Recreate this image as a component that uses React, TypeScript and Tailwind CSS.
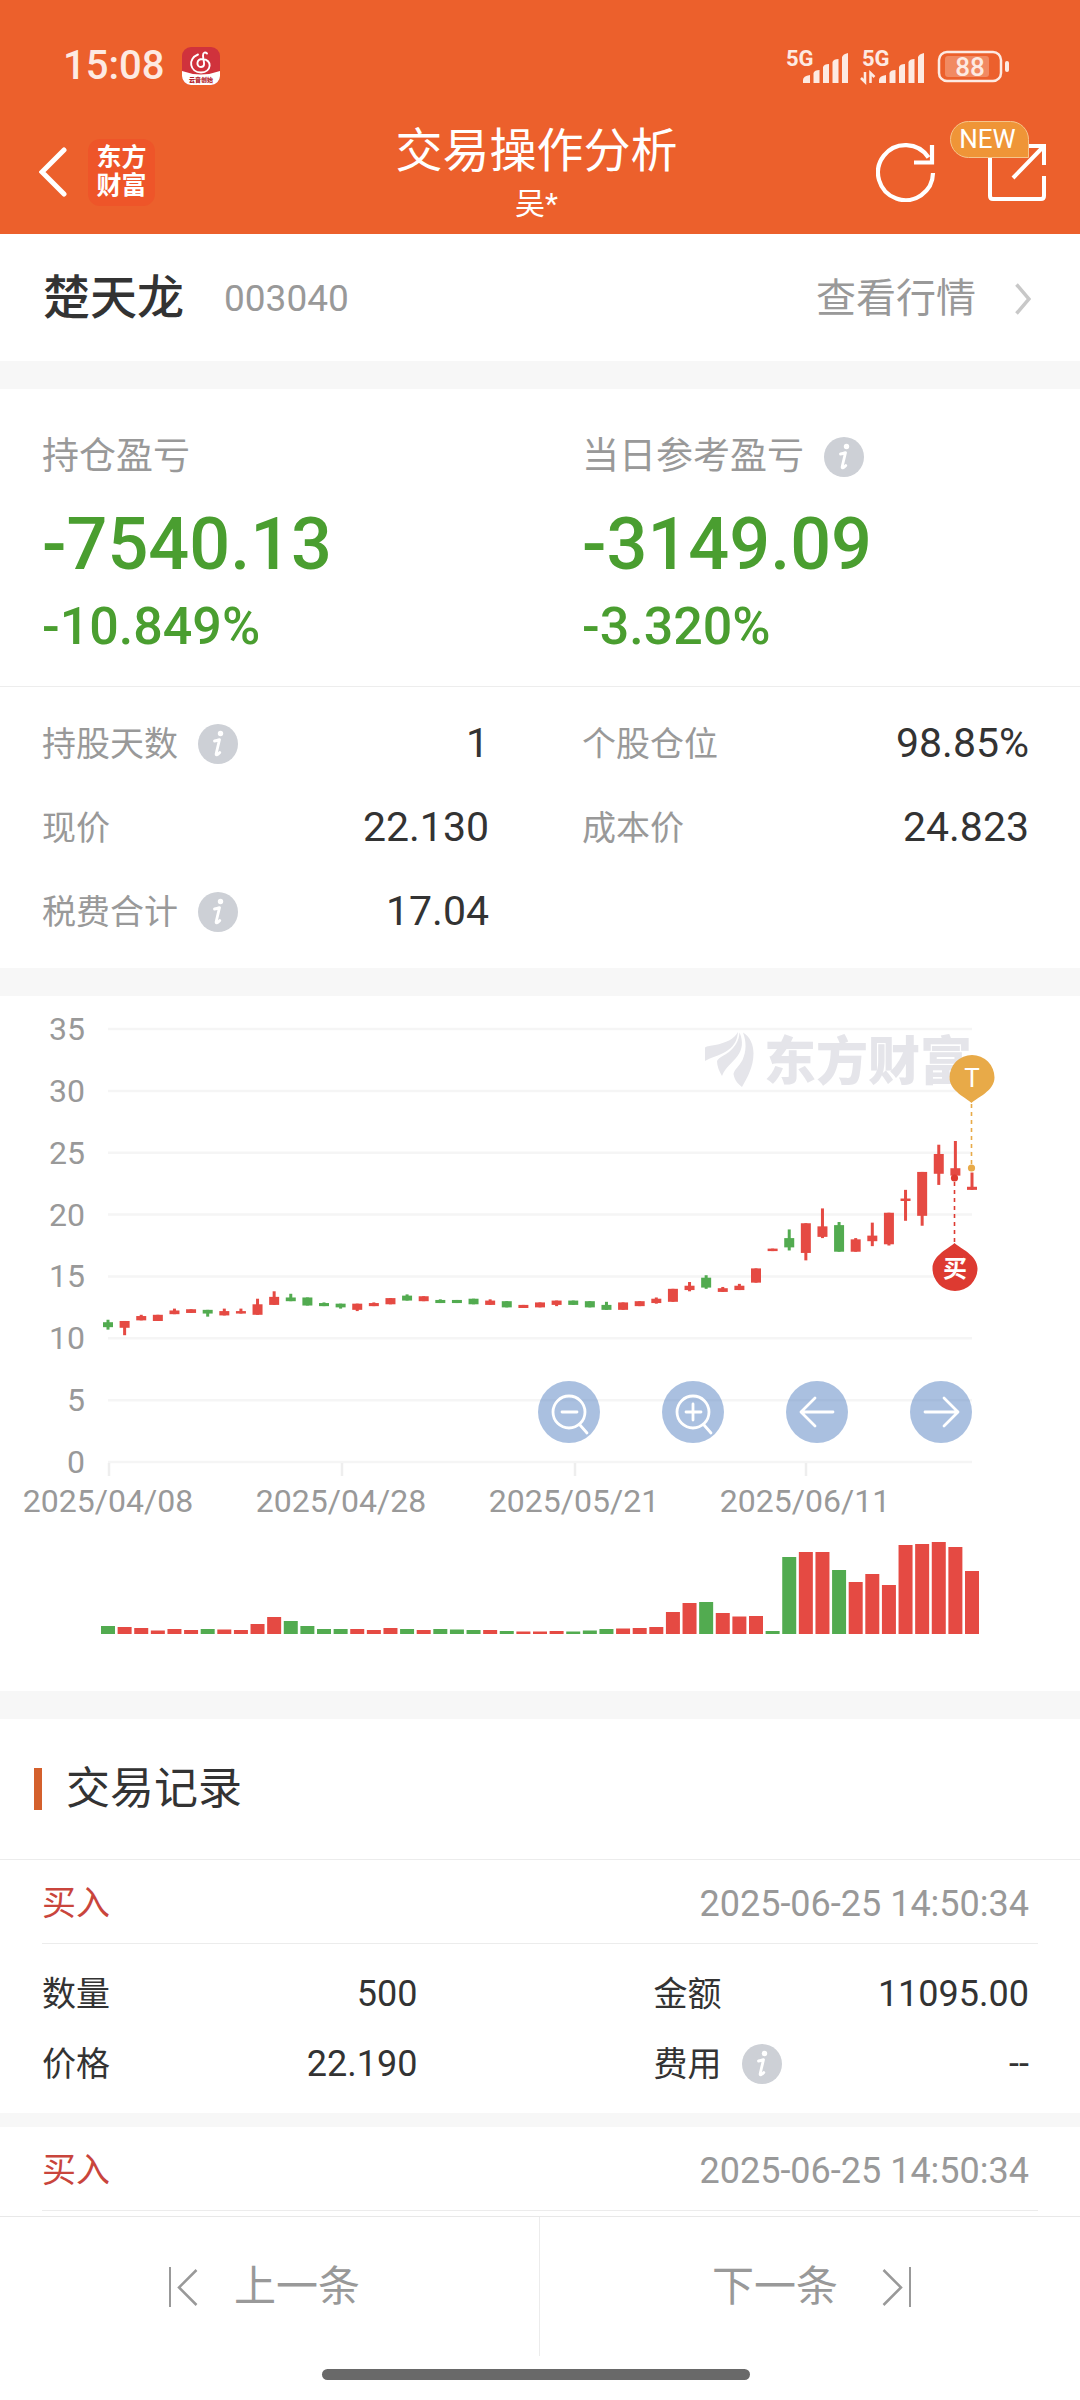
import { ReactNode } from "react";

const RED = "#e54a43";
const GREEN = "#52ab50";

type Candle = {
  color: string;
  high: number;
  top: number;
  bottom: number;
  low: number;
  volume: number;
  volumeColor: string;
};

const colors = { r: RED, g: GREEN };

const candle = (
  color: "r" | "g",
  high: number,
  top: number,
  bottom: number,
  low: number,
  volume: number,
  volumeColor: "r" | "g" = color
): Candle => ({ color: colors[color], high, top, bottom, low, volume, volumeColor: colors[volumeColor] });

const candles: Candle[] = [
  candle("g", 11.5, 11.3, 10.9, 10.7, 8),
  candle("r", 11.4, 11.4, 10.85, 10.25, 7),
  candle("r", 11.9, 11.8, 11.45, 11.45, 6),
  candle("r", 11.9, 11.9, 11.4, 11.4, 3.5),
  candle("r", 12.4, 12.25, 11.95, 11.95, 5),
  candle("r", 12.35, 12.35, 12.05, 12.05, 4),
  candle("g", 12.3, 12.3, 12, 11.75, 5),
  candle("r", 12.4, 12.2, 11.85, 11.85, 4.5),
  candle("r", 12.4, 12.2, 12, 12, 4),
  candle("r", 13.2, 12.75, 11.9, 11.9, 10),
  candle("r", 13.8, 13.35, 12.7, 12.7, 17),
  candle("g", 13.6, 13.3, 13, 13, 13),
  candle("g", 13.3, 13.3, 12.65, 12.65, 8),
  candle("g", 12.9, 12.85, 12.6, 12.6, 5),
  candle("g", 12.8, 12.8, 12.5, 12.4, 5),
  candle("r", 12.8, 12.8, 12.3, 12.2, 5),
  candle("r", 12.9, 12.85, 12.6, 12.6, 4),
  candle("r", 13.25, 13.25, 12.75, 12.75, 6),
  candle("g", 13.55, 13.45, 13.05, 13.05, 5),
  candle("r", 13.4, 13.4, 13, 13, 4),
  candle("g", 13.15, 13.1, 12.85, 12.85, 5),
  candle("g", 13.1, 13.1, 12.85, 12.85, 4.5),
  candle("g", 13.2, 13.2, 12.75, 12.75, 4),
  candle("r", 13.15, 13.05, 12.7, 12.7, 4),
  candle("g", 13, 13, 12.5, 12.5, 3),
  candle("r", 12.7, 12.7, 12.45, 12.45, 2.5),
  candle("r", 12.9, 12.9, 12.5, 12.5, 2.5),
  candle("r", 13.05, 13.05, 12.7, 12.6, 3),
  candle("g", 13.05, 13.05, 12.7, 12.7, 2.5),
  candle("g", 13, 13, 12.5, 12.5, 3.5),
  candle("g", 12.95, 12.7, 12.3, 12.3, 5),
  candle("r", 12.9, 12.9, 12.3, 12.3, 5.5),
  candle("r", 13, 13, 12.6, 12.6, 6),
  candle("r", 13.3, 13.2, 12.85, 12.8, 7),
  candle("r", 14, 14, 12.95, 12.95, 22),
  candle("r", 14.55, 14.25, 13.9, 13.8, 31),
  candle("g", 15.1, 14.9, 14.1, 14, 32),
  candle("r", 14.15, 14.05, 13.75, 13.75, 21),
  candle("r", 14.4, 14.25, 13.9, 13.9, 17.5),
  candle("r", 15.65, 15.65, 14.5, 14.5, 18),
  candle("r", 17.25, 17.25, 17.05, 17.05, 3, "g"),
  candle("g", 18.8, 18.1, 17.35, 17.1, 77),
  candle("r", 19.3, 19.3, 16.9, 16.3, 82),
  candle("r", 20.5, 19.05, 18.2, 18.1, 82),
  candle("g", 19.4, 19.15, 17, 17, 64),
  candle("r", 18.1, 18, 17, 17, 52),
  candle("r", 19.35, 18.3, 17.85, 17.45, 60),
  candle("r", 20.15, 20.15, 17.6, 17.5, 49),
  candle("r", 22, 21.3, 21.1, 19.5, 89),
  candle("r", 23.45, 23.45, 19.9, 19.1, 90),
  candle("r", 25.65, 24.9, 23.3, 22.4, 92),
  candle("r", 25.95, 23.75, 23.15, 23.15, 87),
  candle("r", 23.4, 22.25, 22, 22, 63),
];

const prices = [35, 30, 25, 20, 15, 10, 5, 0];

const dates = [
  { x: 108, label: "2025/04/08" },
  { x: 341, label: "2025/04/28" },
  { x: 574, label: "2025/05/21" },
  { x: 805, label: "2025/06/11" },
];

const xOf = (i: number) => 108 + (i * 864) / 52;
const yOf = (price: number) => 466 - price * 12.37;

function InfoButton({ label }: { label: string }) {
  return (
    <button type="button" aria-label={label} className="shrink-0">
      <svg className="size-10" viewBox="0 0 40 40">
        <circle cx="20" cy="20" r="20" fill="#cdd0d6" />
        <circle cx="22.5" cy="9.5" r="2.7" fill="#fff" />
        <path
          d="M16.500 17c2-.3 3.500-.8 5-1.400L18.200 29.500c-.4 2 .8 2 3.600-1"
          fill="none"
          stroke="#fff"
          strokeWidth="2.8"
          strokeLinecap="round"
          strokeLinejoin="round"
        />
      </svg>
    </button>
  );
}

function SignalBars() {
  return (
    <g fill="#fdeae2">
      <path d="M0 30v-3q0-4 7-5v8z" />
      <path d="M10.500 30V20q1-3 6-3v13z" />
      <path d="M20 30V14q1-3 6-3v19z" />
      <path d="M29.500 30V9q1-3 6-3v24z" />
      <path d="M39 30V4q1-3 6-4v30z" />
    </g>
  );
}

function StatusBar() {
  return (
    <div className="flex h-[100px] items-center justify-between pt-8 pr-[70px] pl-[63px] text-[#fdeae2]">
      <div className="flex items-center gap-[18px]">
        <span className="text-[40px] leading-none font-medium">15:08</span>
        <svg className="size-[38px]" viewBox="0 0 38 38">
          <rect width="38" height="38" rx="9" fill="#d0323c" />
          <path d="M0 24q19 7 38 0v5a9 9 0 0 1-9 9H9a9 9 0 0 1-9-9z" fill="#fff" />
          <path
            d="M16 7.500C5 12 8 25.500 19 25.500C30 25 30.500 12.500 20.500 12c-6.500 0-6.500 8-1.500 8 5.500 0 2-7 2-11.500 0-3.500 2.500-3.500 4-2"
            fill="none"
            stroke="#fff"
            strokeWidth="1.900"
            strokeLinecap="round"
          />
          <text x="19" y="35" textAnchor="middle" fontSize="6" fontWeight="900" fill="#b3262e">
            云音创始
          </text>
        </svg>
      </div>

      <svg className="h-[48px] w-[224px]" viewBox="0 -6 224 48" fill="#fdeae2">
        <text x="0" y="18" fontSize="22" fontWeight="700">5G</text>
        <g transform="translate(17 5)">
          <SignalBars />
        </g>
        <text x="76" y="18" fontSize="22" fontWeight="700">5G</text>
        <path d="M79 24v10l-4-4M84.500 35V25l4 4" fill="none" stroke="#fdeae2" strokeWidth="2.500" />
        <g transform="translate(93 5)">
          <SignalBars />
        </g>
        <rect x="153" y="4" width="62" height="29" rx="8" fill="none" stroke="#fdeae2" strokeWidth="2.500" />
        <rect x="159" y="8" width="44" height="21" rx="3" fillOpacity="0.3" />
        <rect x="219" y="13" width="4" height="11" rx="2" />
        <text x="184" y="28" textAnchor="middle" fontSize="26" fontWeight="500">88</text>
      </svg>
    </div>
  );
}

function Header() {
  return (
    <header className="bg-[#ec602c] text-white">
      <StatusBar />

      <div className="grid h-[134px] grid-cols-[1fr_auto_1fr] items-center pt-2.5 pr-[34px] pl-[39px]">
        <div className="flex items-center gap-[21px]">
          <button type="button" aria-label="返回">
            <svg className="h-[50px] w-7" viewBox="0 0 28 50" fill="none" stroke="#fff" strokeWidth="5" strokeLinecap="round">
              <path d="M25 3 3 25l22 22" />
            </svg>
          </button>
          <a
            href="#home"
            className="flex size-[67px] flex-col items-center justify-center rounded-xl bg-[#ee5529] text-[25px] leading-7 font-bold"
          >
            <span>东方</span>
            <span>财富</span>
          </a>
        </div>

        <div className="flex flex-col items-center gap-1.5 pr-3">
          <h1 className="text-[47px] leading-[58px] font-normal">交易操作分析</h1>
          <p className="text-[30px] leading-9">吴*</p>
        </div>

        <div className="flex items-center justify-end gap-[52px]">
          <button type="button" aria-label="刷新">
            <svg className="size-[60px]" viewBox="0 0 60 60" fill="none" stroke="#fff" strokeWidth="4.200">
              <path d="M57 31A27.500 27.500 0 1 1 52.500 15.500" />
              <path d="M56 3v17.500H38" />
            </svg>
          </button>
          <button type="button" aria-label="分享" className="relative">
            <svg className="size-[58px]" viewBox="0 0 58 58" fill="none" stroke="#fff" strokeWidth="4">
              <path d="M2 12v41q0 3 3 3h48q3 0 3-3V33" />
              <path d="M40 3h16v19M56 3 25 35" />
            </svg>
            <span className="absolute -top-[22px] -left-[38px] flex h-[37px] w-[79px] items-center justify-center rounded-[19px] rounded-br-none border border-[#f6c58c] bg-[#ef9537] pr-1 text-[26px]">
              NEW
            </span>
          </button>
        </div>
      </div>
    </header>
  );
}

function Profit({ label, value, rate, info }: { label: string; value: string; rate: string; info?: boolean }) {
  return (
    <div className="pl-[42px]">
      <div className="flex h-10 items-center gap-5">
        <span className="text-[37px] text-[#999]">{label}</span>
        {info && <InfoButton label={label + "说明"} />}
      </div>
      <p className="mt-6 text-[72px] leading-[88px] font-medium text-[#4a9e30]">{value}</p>
      <p className="mt-2 text-[52px] leading-[60px] font-medium text-[#4a9e30]">{rate}</p>
    </div>
  );
}

function Stat({ label, value, info }: { label: string; value: string; info?: boolean }) {
  return (
    <div className="flex h-[84px] items-center pr-[51px] pl-[42px]">
      <dt className="flex items-center gap-5 text-[34px] text-[#999]">
        {label}
        {info && <InfoButton label={label + "说明"} />}
      </dt>
      <dd className="ml-auto text-[41px] text-[#333]">{value}</dd>
    </div>
  );
}

function RoundButton({ label, children }: { label: string; children: ReactNode }) {
  return (
    <button type="button" aria-label={label} className="flex size-[62px] items-center justify-center rounded-full bg-[#5582c2]/50">
      <svg
        className="size-[62px]"
        viewBox="0 0 62 62"
        fill="none"
        stroke="#fff"
        strokeWidth="2.800"
        strokeLinecap="round"
        strokeLinejoin="round"
      >
        {children}
      </svg>
    </button>
  );
}

function Chart() {
  return (
    <section className="relative">
      <svg className="block h-auto w-full" viewBox="0 0 1080 695">
        {prices.map((p) => (
          <g key={p}>
            <line x1="108" x2="972" y1={yOf(p)} y2={yOf(p)} stroke="#f5f5f5" strokeWidth="2.500" />
            <text x="85" y={yOf(p) + 11} textAnchor="end" fontSize="32" fill="#999">
              {p}
            </text>
          </g>
        ))}

        {dates.map((d) => (
          <g key={d.label}>
            <line x1={d.x + 1} x2={d.x + 1} y1="467" y2="480" stroke="#eee" strokeWidth="2.500" />
            <text x={d.x} y="516" textAnchor="middle" fontSize="32" fill="#999">
              {d.label}
            </text>
          </g>
        ))}

        {/* watermark */}
        <g fill="#e5e5ea">
          <path d="M705 51.500c2-1.500 6-1.500 10-2.500 11-2 19-6 23-13-1 10-5 15-12 19.500C719 60 711 61 705 65z" />
          <path d="M739.500 36.500c4 9 3 17-2 23.500-5 7-12 11-15.500 20-3-5-5-10-5-15 2-4 7-5 12-9 6-5 10-11 10.500-19.500z" />
          <path d="M743 36.500c7 4 10.500 12 10.500 21 0 13-6 24-11.500 33.500-4-3-7.500-7-8.500-13 1-5 6-8 9-14 4-9 4-18 .5-27.500z" />
          <text x="764" y="84" fontSize="52" fontWeight="900">东方财富</text>
        </g>

        {candles.map((c, i) => {
          const x = xOf(i);
          return (
            <g key={i} fill={c.color}>
              <rect x={x - 1.5} y={yOf(c.high)} width="3" height={yOf(c.low) - yOf(c.high)} />
              <rect x={x - 5} y={yOf(c.top)} width="10" height={yOf(c.bottom) - yOf(c.top)} />
              <rect x={x - 7} y={638 - c.volume} width="14" height={c.volume} fill={c.volumeColor} />
            </g>
          );
        })}

        {/* T marker */}
        <line x1="971.500" x2="971.500" y1="108" y2="168" stroke="#e8aa48" strokeWidth="1.600" strokeDasharray="4 4" />
        <circle cx="971.500" cy="172" r="3.600" fill="#e8aa48" />
        <path d="M971.500 107c-5-5-22-12-22-25.500a22.500 22.500 0 0 1 45 0c0 13.500-18 20.500-23 25.500z" fill="#e8aa48" />
        <text x="972" y="91" textAnchor="middle" fontSize="26" fill="#fff">T</text>

        {/* buy marker */}
        <line x1="954.500" x2="954.500" y1="186" y2="248" stroke="#dd3a31" strokeWidth="1.600" strokeDasharray="4 4" />
        <circle cx="954.500" cy="182" r="3.600" fill="#dd3a31" />
        <path d="M954.500 247c5 5 23 12 23 25.500a22.500 22.500 0 0 1-45 0c0-13.500 17-20.500 22-25.500z" fill="#dd3a31" />
        <text x="955" y="281" textAnchor="middle" fontSize="24" fontWeight="700" fill="#fff">买</text>
      </svg>

      <div className="absolute top-[385px] right-[108px] flex gap-[62px]">
        <RoundButton label="缩小">
          <circle cx="31" cy="31" r="16" />
          <path d="M24 31h15M42 44l7 8" />
        </RoundButton>
        <RoundButton label="放大">
          <circle cx="31" cy="31" r="16" />
          <path d="M24 31h15M31 23v16M42 44l7 8" />
        </RoundButton>
        <RoundButton label="向左">
          <path d="M47 31H15M29 17 15 31l14 14" />
        </RoundButton>
        <RoundButton label="向右">
          <path d="M15 31h33M34 17l14 14-14 14" />
        </RoundButton>
      </div>
    </section>
  );
}

function RecordHead({ type, time }: { type: string; time: string }) {
  return (
    <div className="mx-[42px] flex h-[84px] items-center justify-between border-b border-[#ececec] pt-1 pr-[9px]">
      <span className="text-[34px] text-[#c9453c]">{type}</span>
      <time className="text-[36px] text-[#999]">{time}</time>
    </div>
  );
}

function Field({ label, value, info }: { label: string; value: string; info?: boolean }) {
  return (
    <div className="flex h-[70px] items-center text-[#333]">
      <dt className="flex items-center gap-5 text-[34px]">
        {label}
        {info && <InfoButton label={label + "说明"} />}
      </dt>
      <dd className="ml-auto text-[36px]">{value}</dd>
    </div>
  );
}

function Gap() {
  return <div className="h-7 bg-[#f7f7f7]" />;
}

export default function App() {
  return (
    <div className="flex min-h-screen flex-col bg-white font-['Roboto','Noto_Sans_CJK_SC',sans-serif]">
      <Header />

      <main>
        <section className="flex h-[127px] items-center pt-0.5 pr-[49px] pl-[43px]">
          <h2 className="text-[47px] font-medium text-[#333]">楚天龙</h2>
          <span className="ml-10 text-[37px] text-[#999]">003040</span>
          <a href="#quote" className="ml-auto flex items-center gap-[39px] text-[40px] text-[#999]">
            查看行情
            <svg className="h-8 w-4" viewBox="0 0 16 32" fill="none" stroke="#c8c8c8" strokeWidth="3.500">
              <path d="M1.500 1.500 14 16 1.500 30.500" />
            </svg>
          </a>
        </section>
        <Gap />

        <section>
          <div className="grid h-[298px] grid-cols-2 border-b border-[#ededed] pt-12">
            <Profit label="持仓盈亏" value="-7540.13" rate="-10.849%" />
            <Profit label="当日参考盈亏" value="-3149.09" rate="-3.320%" info />
          </div>
          <dl className="grid grid-cols-2 pt-[15px] pb-3.5">
            <Stat label="持股天数" value="1" info />
            <Stat label="个股仓位" value="98.85%" />
            <Stat label="现价" value="22.130" />
            <Stat label="成本价" value="24.823" />
            <Stat label="税费合计" value="17.04" info />
          </dl>
        </section>
        <Gap />

        <Chart />
        <Gap />

        <section>
          <div className="flex h-[141px] items-center gap-6 border-b border-[#ececec] pl-[34px]">
            <span className="h-[42px] w-2 bg-[#d4602c]" />
            <h2 className="text-[44px] font-normal text-[#333]">交易记录</h2>
          </div>

          <article>
            <RecordHead type="买入" time="2025-06-25 14:50:34" />
            <dl className="grid grid-cols-2 gap-x-[236px] pt-[15px] pr-[51px] pb-3.5 pl-[42px]">
              <Field label="数量" value="500" />
              <Field label="金额" value="11095.00" />
              <Field label="价格" value="22.190" />
              <Field label="费用" value="--" info />
            </dl>
          </article>
          <div className="h-3.5 bg-[#f7f7f7]" />
          <article>
            <RecordHead type="买入" time="2025-06-25 14:50:34" />
          </article>
        </section>
      </main>

      {/* bottom pager */}
      <footer className="sticky bottom-0 mt-auto border-t border-[#e8e8e8] bg-white">
        <nav className="grid h-[139px] grid-cols-2 divide-x divide-[#ececec] text-[42px] text-[#999]">
          <button type="button" className="flex items-center gap-9 pl-[168px]">
            <svg className="h-10 w-[30px]" viewBox="0 0 30 40" fill="none" stroke="#999" strokeWidth="2.500">
              <path d="M2 0v40" strokeWidth="2" />
              <path d="M28.500 3 11 20.500 28.500 38" />
            </svg>
            上一条
          </button>
          <button type="button" className="flex items-center justify-end gap-11 pr-[168px]">
            下一条
            <svg className="h-10 w-[30px]" viewBox="0 0 30 40" fill="none" stroke="#999" strokeWidth="2.500">
              <path d="M28 0v40" strokeWidth="2" />
              <path d="M1.500 3 19 20.500 1.500 38" />
            </svg>
          </button>
        </nav>
        <div className="flex h-11 justify-center pt-[13px] pr-2">
          <div className="h-[11px] w-[428px] rounded-full bg-[#696969]" />
        </div>
      </footer>
    </div>
  );
}
